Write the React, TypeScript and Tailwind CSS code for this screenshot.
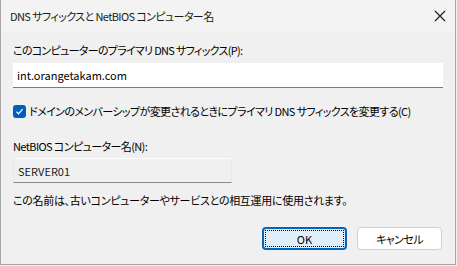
import React from "react";

const font = { fontFamily: '"Noto Sans CJK JP", "Noto Sans", sans-serif' };

export default function App() {
  return (
    <div className="w-[457px] h-[266px] bg-[#f0f0f0] overflow-hidden [font-feature-settings:'palt']" style={font}>
      <div className="w-[456px] h-[265px] flex flex-col border-l border-r border-b border-[#a8a8a8] bg-[#f0f0f0] text-[11px] leading-[16px] text-black">
        {/* Title bar */}
        <div className="h-[31px] shrink-0 bg-[#f3f3f3] flex items-center justify-between pl-[9px] pr-[8px]">
          <span className="tracking-[-0.6px] text-[#1a1a1a]">DNS サフィックスと NetBIOS コンピューター名</span>
          <svg width="12" height="12" viewBox="0 0 12 12" className="mr-[1px]">
            <path d="M1 1 L11 11 M11 1 L1 11" stroke="#1a1a1a" strokeWidth="1.1" fill="none" />
          </svg>
        </div>
        {/* Body */}
        <div className="flex flex-col pl-[12px] pr-[12px] pt-[11px]">
          <div className="tracking-[-0.7px]">このコンピューターのプライマリ DNS サフィックス(P):</div>
          <div className="mt-[5px] w-[430px] h-[25px] bg-white border-b border-[#7a7a7a] flex items-center pl-[4px]">
            int.orangetakam.com
          </div>
          <div className="mt-[15px] flex items-center h-[16px]">
            <div className="w-[13px] h-[13px] rounded-[3px] bg-[#005fb8] flex items-center justify-center shrink-0">
              <svg width="9" height="9" viewBox="0 0 9 9">
                <path d="M1.5 4.8 L3.6 6.8 L7.6 2.2" stroke="white" strokeWidth="1.2" fill="none" />
              </svg>
            </div>
            <span className="ml-[3px] whitespace-nowrap tracking-[-0.6px]">ドメインのメンバーシップが変更されるときにプライマリ DNS サフィックスを変更する(C)</span>
          </div>
          <div className="mt-[19px] tracking-[-0.6px]">NetBIOS コンピューター名(N):</div>
          <div className="mt-[4px] w-[219px] h-[25px] bg-[#f0f0f0] border-t border-t-white border-b border-b-[#8a8a8a] border-l border-l-[#e8e8e8] border-r border-r-[#e8e8e8] flex items-center pl-[4px] text-[#1a1a1a]">
            SERVER01
          </div>
          <div className="mt-[9px] tracking-[-0.3px]">この名前は、古いコンピューターやサービスとの相互運用に使用されます。</div>
          <div className="mt-[19px] flex justify-end gap-[10px] pr-[1px]">
            <div className="w-[85px] h-[23px] rounded-[4px] border-2 border-[#0067c0] bg-[#e0eef9] flex items-center justify-center p-[1px]">
              <div className="w-full h-full border border-dotted border-black flex items-center justify-center rounded-[1px]">
                OK
              </div>
            </div>
            <div className="w-[85px] h-[23px] rounded-[4px] border border-[#d0d0d0] bg-white flex items-center justify-center tracking-[-0.6px]">
              キャンセル
            </div>
          </div>
        </div>
      </div>
    </div>
  );
}
